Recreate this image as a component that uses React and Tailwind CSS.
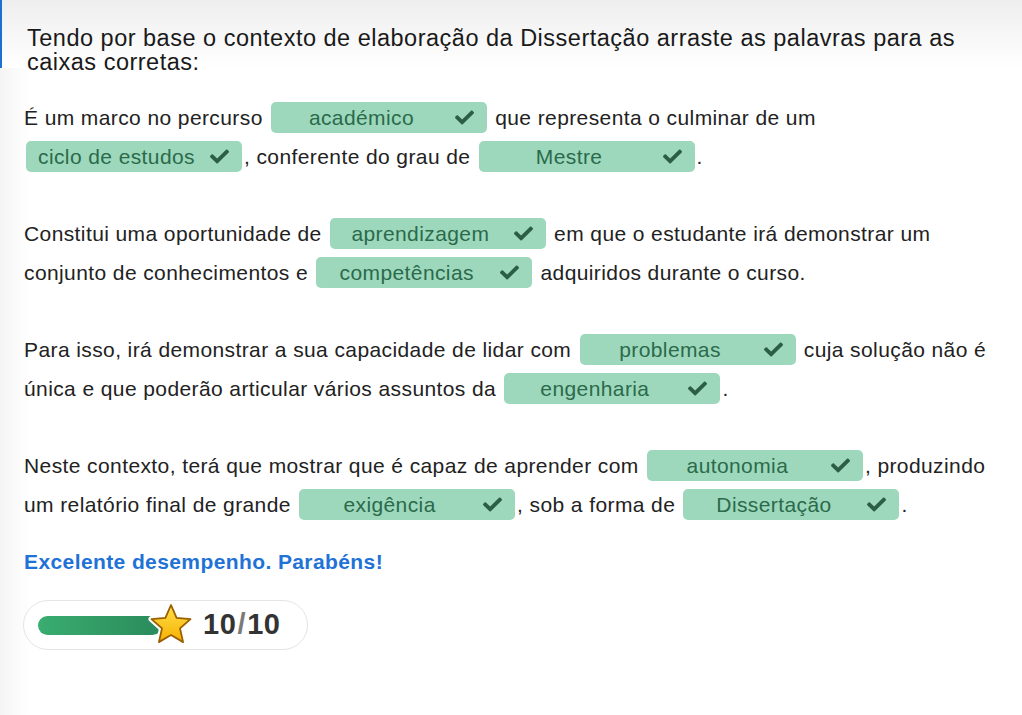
import React from "react";
import { FaCheck } from "react-icons/fa";

const Blank = ({ w }) => (
  <span className="inline-flex items-center align-middle w-[216px] h-[31px] rounded-[5px] bg-[#9dd8bc] pl-[10px] pr-[13px] mx-[2px] text-[#2b6a4b] -mt-[3px]">
    <span className="flex-1 mr-[13px] text-center leading-none whitespace-nowrap">{w}</span>
    <FaCheck className="w-[19px] h-[19px] text-[#2c5e45] shrink-0" />
  </span>
);

function Star() {
  return (
    <svg width="46" height="46" viewBox="0 0 46 46" className="-ml-[14px] relative">
      <defs>
        <linearGradient id="sg" x1="0" y1="0" x2="0" y2="1">
          <stop offset="0" stopColor="#ffe04a" />
          <stop offset="1" stopColor="#f6b000" />
        </linearGradient>
      </defs>
      <polygon
        points="23,3 28.6,15.8 42.5,17.1 32,26.4 35.1,40.1 23,33 10.9,40.1 14,26.4 3.5,17.1 17.4,15.8"
        fill="#fff"
        stroke="#fff"
        strokeWidth="6"
        strokeLinejoin="round"
      />
      <polygon
        points="23,3 28.6,15.8 42.5,17.1 32,26.4 35.1,40.1 23,33 10.9,40.1 14,26.4 3.5,17.1 17.4,15.8"
        fill="url(#sg)"
        stroke="#9a5f00"
        strokeWidth="1.8"
        strokeLinejoin="round"
      />
    </svg>
  );
}

export default function App() {
  return (
    <div className="min-h-[715px] w-full bg-white font-[Liberation_Sans,Arial,sans-serif] text-[#222]">
      <div className="h-[68px] border-l-2 border-[#1c6fd3] bg-[linear-gradient(#eeeeee,#ffffff)] pl-[25px] pt-[26px]">
        <h1 className="text-[23.5px] leading-[24px] text-[#1a1a1a] font-normal tracking-[0.5px]">
          Tendo por base o contexto de elaboração da Dissertação arraste as palavras para as
          <br />
          caixas corretas:
        </h1>
      </div>
      <div className="px-[24px] pt-[30px] bg-[linear-gradient(90deg,#f4f4f4,#ffffff_30px)]">
        <div className="text-[21px] leading-[39px] tracking-[0.4px] flex flex-col gap-[38px]">
          <p>
            É um marco no percurso <Blank w="académico" /> que representa o culminar de um
            <br />
            <Blank w="ciclo de estudos" />, conferente do grau de <Blank w="Mestre" />.
          </p>
          <p>
            Constitui uma oportunidade de <Blank w="aprendizagem" /> em que o estudante irá demonstrar um
            <br />
            conjunto de conhecimentos e <Blank w="competências" /> adquiridos durante o curso.
          </p>
          <p>
            Para isso, irá demonstrar a sua capacidade de lidar com <Blank w="problemas" /> cuja solução não é
            <br />
            única e que poderão articular vários assuntos da <Blank w="engenharia" />.
          </p>
          <p>
            Neste contexto, terá que mostrar que é capaz de aprender com <Blank w="autonomia" />, produzindo
            <br />
            um relatório final de grande <Blank w="exigência" />, sob a forma de <Blank w="Dissertação" />.
          </p>
        </div>
        <p className="mt-[26px] text-[21px] leading-[24px] font-bold text-[#1f72d6] tracking-[0.4px]">
          Excelente desempenho. Parabéns!
        </p>
        <div className="mt-[26px] pb-[65px]">
          <div className="inline-flex items-center h-[50px] w-[285px] rounded-full border border-[#e4e4e4] bg-white pl-[14px] -ml-px">
            <div className="w-[124px] h-[19px] rounded-full bg-[linear-gradient(90deg,#3aad70,#2a8a5b)]" />
            <Star />
            <span className="ml-[9px] text-[29px] font-bold text-[#333] tracking-[0.6px]">
              10<span className="text-[#7a7a7a] mx-[1px]">/</span>10
            </span>
          </div>
        </div>
      </div>
    </div>
  );
}
